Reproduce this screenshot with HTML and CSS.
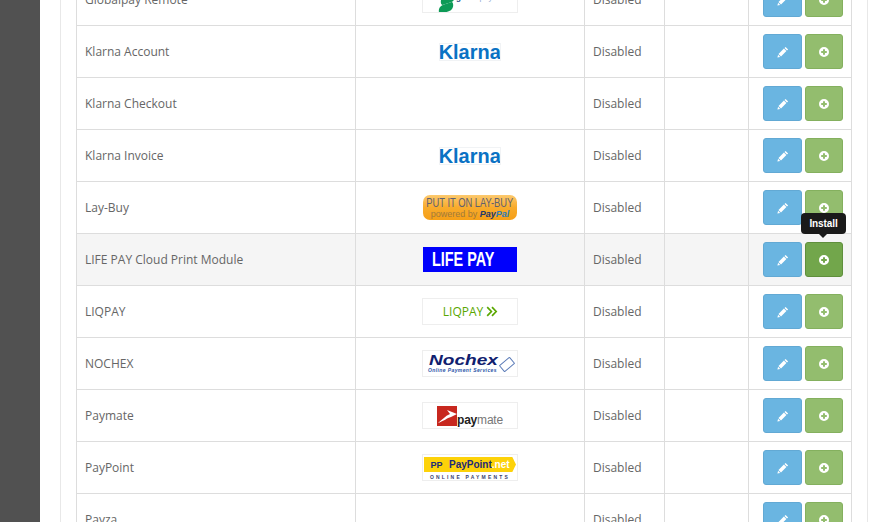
FILE: index.html
```html
<!DOCTYPE html>
<html lang="en">
<head>
    <meta charset="UTF-8">
    <meta name="viewport" content="width=device-width, initial-scale=1.0">
    <title>Extensions - Payments</title>
    <link rel="stylesheet" href="styles.css">
</head>
<body>
    <svg class="icon-defs" width="0" height="0">
        <symbol id="i-pencil" viewBox="0 0 12 12">
            <path d="M8.6.9 11.1 3.4 10 4.5 7.5 2zM6.9 2.6 9.4 5.100 4 10.500 1.500 8zM1.100 8.800 3.200 10.900.4 11.600z" fill="#fff"/>
        </symbol>
        <symbol id="i-plus" viewBox="0 0 12 12">
            <path fill-rule="evenodd" d="M6 1a5 5 0 1 1 0 10A5 5 0 0 1 6 1zM5 3.200V5H3.200V7H5V8.800H7V7H8.800V5H7V3.200z" fill="#fff"/>
        </symbol>
    </svg>

    <aside class="sidebar"></aside>

    <main class="content">
        <div class="panel">
            <table class="list">
                <colgroup>
                    <col class="col-name">
                    <col class="col-logo">
                    <col class="col-status">
                    <col class="col-order">
                    <col class="col-action">
                </colgroup>
                <tbody>
                    <tr>
                        <td>Globalpay Remote</td>
                        <td class="logo-cell"><span class="logo logo-global"><i class="leaf leaf-a"></i><i class="leaf leaf-b"></i><span class="global-text"><b>global</b>payments</span></span></td>
                        <td>Disabled</td>
                        <td></td>
                        <td class="actions"><a class="btn btn-edit"><svg><use href="#i-pencil"/></svg></a><a class="btn btn-add"><svg><use href="#i-plus"/></svg></a></td>
                    </tr>
                    <tr>
                        <td>Klarna Account</td>
                        <td class="logo-cell"><span class="logo logo-klarna"><span class="squeeze">Klarna</span></span></td>
                        <td>Disabled</td>
                        <td></td>
                        <td class="actions"><a class="btn btn-edit"><svg><use href="#i-pencil"/></svg></a><a class="btn btn-add"><svg><use href="#i-plus"/></svg></a></td>
                    </tr>
                    <tr>
                        <td>Klarna Checkout</td>
                        <td class="logo-cell"></td>
                        <td>Disabled</td>
                        <td></td>
                        <td class="actions"><a class="btn btn-edit"><svg><use href="#i-pencil"/></svg></a><a class="btn btn-add"><svg><use href="#i-plus"/></svg></a></td>
                    </tr>
                    <tr>
                        <td>Klarna Invoice</td>
                        <td class="logo-cell"><span class="logo logo-klarna"><span class="squeeze">Klarna</span></span></td>
                        <td>Disabled</td>
                        <td></td>
                        <td class="actions"><a class="btn btn-edit"><svg><use href="#i-pencil"/></svg></a><a class="btn btn-add"><svg><use href="#i-plus"/></svg></a></td>
                    </tr>
                    <tr>
                        <td>Lay-Buy</td>
                        <td class="logo-cell"><span class="logo logo-laybuy"><span class="lb-top">PUT IT ON LAY-BUY</span><span class="lb-sub">powered by <b>Pay<em>Pal</em></b></span></span></td>
                        <td>Disabled</td>
                        <td></td>
                        <td class="actions"><a class="btn btn-edit"><svg><use href="#i-pencil"/></svg></a><a class="btn btn-add"><svg><use href="#i-plus"/></svg></a></td>
                    </tr>
                    <tr class="hover">
                        <td>LIFE PAY Cloud Print Module</td>
                        <td class="logo-cell"><span class="logo logo-lifepay"><span class="lp-text">LIFE PAY</span></span></td>
                        <td>Disabled</td>
                        <td></td>
                        <td class="actions"><a class="btn btn-edit"><svg><use href="#i-pencil"/></svg></a><a class="btn btn-add"><span class="tooltip">Install</span><svg><use href="#i-plus"/></svg></a></td>
                    </tr>
                    <tr>
                        <td>LIQPAY</td>
                        <td class="logo-cell"><span class="logo logo-liqpay">LIQPAY<svg viewBox="0 0 10 9"><path d="M1 .8 4.500 4.500 1 8.200M5 .8 8.500 4.500 5 8.200" fill="none" stroke="#5aa700" stroke-width="1.400"/></svg></span></td>
                        <td>Disabled</td>
                        <td></td>
                        <td class="actions"><a class="btn btn-edit"><svg><use href="#i-pencil"/></svg></a><a class="btn btn-add"><svg><use href="#i-plus"/></svg></a></td>
                    </tr>
                    <tr>
                        <td>NOCHEX</td>
                        <td class="logo-cell"><span class="logo logo-nochex"><span class="nx-name">Nochex</span><span class="nx-sub">Online Payment Services</span><i class="nx-card"></i></span></td>
                        <td>Disabled</td>
                        <td></td>
                        <td class="actions"><a class="btn btn-edit"><svg><use href="#i-pencil"/></svg></a><a class="btn btn-add"><svg><use href="#i-plus"/></svg></a></td>
                    </tr>
                    <tr>
                        <td>Paymate</td>
                        <td class="logo-cell"><span class="logo logo-paymate"><i class="pm-flag"><svg viewBox="0 0 20 20"><path d="M1 17C5 14 8 10 13 8L10 4 20 8 14 11C10 12 7 15 1 17z" fill="#fff"/></svg></i><span class="pm-text"><b>pay</b>mate</span></span></td>
                        <td>Disabled</td>
                        <td></td>
                        <td class="actions"><a class="btn btn-edit"><svg><use href="#i-pencil"/></svg></a><a class="btn btn-add"><svg><use href="#i-plus"/></svg></a></td>
                    </tr>
                    <tr>
                        <td>PayPoint</td>
                        <td class="logo-cell"><span class="logo logo-paypoint"><span class="pp-bar"><span class="pp-mark">PP</span><span class="pp-name">PayPoint<em>.net</em></span></span><span class="pp-sub">ONLINE PAYMENTS</span></span></td>
                        <td>Disabled</td>
                        <td></td>
                        <td class="actions"><a class="btn btn-edit"><svg><use href="#i-pencil"/></svg></a><a class="btn btn-add"><svg><use href="#i-plus"/></svg></a></td>
                    </tr>
                    <tr>
                        <td>Payza</td>
                        <td class="logo-cell"></td>
                        <td>Disabled</td>
                        <td></td>
                        <td class="actions"><a class="btn btn-edit"><svg><use href="#i-pencil"/></svg></a><a class="btn btn-add"><svg><use href="#i-plus"/></svg></a></td>
                    </tr>
                </tbody>
            </table>
        </div>
    </main>
</body>
</html>
```
FILE: styles.css
```css
html, body {
    height: 100%;
}

body {
    margin: 0;
    display: flex;
    overflow: hidden;
    background: #fff;
    font-family: 'Open Sans', sans-serif;
    font-size: 12px;
    color: #666;
}

.icon-defs {
    position: absolute;
}

.sidebar {
    flex: 0 0 40px;
    background: #515151;
}

.content {
    flex: 1;
    padding-left: 20px;
    padding-right: 17px;
    overflow: hidden;
}

.panel {
    margin-top: -27px;
    padding: 0 16px 0 15px;
    border-left: 1px solid #e8e8e8;
    border-right: 1px solid #e8e8e8;
}

.list {
    width: 775px;
    table-layout: fixed;
    border-collapse: collapse;
}

.col-name { width: 279px; }
.col-logo { width: 229px; }
.col-status { width: 80px; }
.col-order { width: 84px; }
.col-action { width: 103px; }

.list td {
    height: 51px;
    padding: 0 8px;
    border: 1px solid #ddd;
    vertical-align: middle;
    box-sizing: content-box;
    white-space: nowrap;
}

.list tr.hover td {
    background: #f5f5f5;
}

.logo-cell {
    text-align: center;
}

.actions {
    text-align: right;
    font-size: 0;
}

/* buttons */
.btn {
    position: relative;
    display: inline-flex;
    align-items: center;
    justify-content: center;
    height: 33px;
    border-radius: 3px;
    border: 1px solid;
    vertical-align: middle;
}

.btn svg {
    width: 12px;
    height: 12px;
}

.btn-edit {
    width: 37px;
    margin-right: 3px;
    background: #6ab5e1;
    border-color: #62a9d4;
}

.btn-add {
    width: 36px;
    background: #93bd6e;
    border-color: #84b05e;
}

.hover .btn-add {
    background: #72a64b;
    border-color: #5f8f3c;
}

.tooltip {
    position: absolute;
    left: -5px;
    top: -30px;
    width: 45px;
    height: 21px;
    line-height: 21px;
    text-align: center;
    background: #1a1a1a;
    border-radius: 4px;
    color: #fff;
    font-family: 'Liberation Sans', sans-serif;
    font-size: 10px;
    font-weight: 700;
    letter-spacing: -.1px;
}

.tooltip::after {
    content: "";
    position: absolute;
    left: 18px;
    top: 21px;
    border: 4px solid transparent;
    border-top-color: #1a1a1a;
    border-bottom: 0;
}

/* payment logos */
.logo {
    position: relative;
    display: inline-flex;
    align-items: center;
    justify-content: center;
    box-sizing: border-box;
    width: 96px;
    height: 27px;
    border: 1px solid #eee;
    background: #fff;
    vertical-align: middle;
    overflow: hidden;
}

.leaf {
    position: absolute;
    left: 16px;
    width: 16px;
    height: 8px;
    background: #0d9a56;
    border-radius: 8px 2px;
    transform: rotate(-18deg);
}

.leaf-a { top: 8px; left: 17px; }
.leaf-b { top: 17px; left: 15px; }

.global-text {
    position: absolute;
    left: 33px;
    top: 6px;
    font-family: 'Liberation Sans', sans-serif;
    font-size: 8px;
    color: #8fa9cf;
}

.global-text b {
    color: #1d3f7f;
}

.logo-klarna {
    width: 62px;
    height: 18px;
    border-color: #f1f3f5;
    font-family: 'Liberation Sans', sans-serif;
    font-size: 21px;
    line-height: 16px;
    font-weight: 700;
    color: #0a72c4;
}

.squeeze {
    flex: none;
    transform: scaleX(.95);
}

.logo-laybuy {
    flex-direction: column;
    width: 94px;
    height: 25px;
    border: 0;
    border-radius: 7px;
    background: linear-gradient(#fcc96e, #f8ab2c 50%, #f59f17);
    font-family: 'Liberation Sans', sans-serif;
    color: #6b6b70;
}

.lb-top {
    flex: none;
    font-size: 12px;
    line-height: 12px;
    color: #5f6070;
    white-space: nowrap;
    transform: scaleX(.78);
}

.lb-sub {
    flex: none;
    font-size: 9px;
    line-height: 10px;
    color: #a07a3c;
}

.lb-sub b {
    font-style: italic;
    color: #24396b;
}

.lb-sub em {
    color: #2c7cb8;
}

.logo-lifepay {
    width: 94px;
    height: 25px;
    border: 0;
    justify-content: flex-start;
    padding-left: 9px;
    background: #0000fc;
    color: #fff;
    font-family: 'Liberation Sans', sans-serif;
    font-size: 20px;
    font-weight: 700;
}

.lp-text {
    flex: none;
    transform: scaleX(.72);
    transform-origin: left;
}

.logo-liqpay {
    gap: 3px;
    padding-left: 1px;
    font-family: 'Open Sans', sans-serif;
    font-size: 12px;
    color: #5aa700;
}

.logo-liqpay svg {
    width: 12px;
    height: 11px;
}

.nx-name {
    position: absolute;
    left: 6px;
    top: 0;
    font-family: 'Liberation Sans', sans-serif;
    font-size: 15px;
    line-height: 17px;
    font-weight: 700;
    font-style: italic;
    color: #10206e;
    transform: scaleX(1.27);
    transform-origin: left;
}

.nx-sub {
    position: absolute;
    left: 5px;
    top: 16px;
    font-family: 'Liberation Sans', sans-serif;
    font-size: 5px;
    line-height: 6px;
    font-weight: 700;
    font-style: italic;
    letter-spacing: .4px;
    color: #2c55a8;
}

.nx-card {
    position: absolute;
    left: 77px;
    top: 9px;
    width: 12px;
    height: 7px;
    border: 1px solid #5c7cb8;
    border-radius: 1px;
    transform: rotate(-40deg);
}

.pm-flag {
    display: block;
    width: 20px;
    height: 20px;
    background: #c8281f;
}

.pm-flag svg {
    display: block;
}

.pm-text {
    margin-top: 9px;
    font-family: 'Liberation Sans', sans-serif;
    font-size: 12px;
    line-height: 14px;
    letter-spacing: -.2px;
    color: #777;
}

.pm-text b {
    color: #222;
}

.logo-paypoint {
    flex-direction: column;
    justify-content: flex-start;
    padding-top: 2px;
    font-family: 'Liberation Sans', sans-serif;
}

.pp-bar {
    flex: none;
    display: flex;
    align-items: center;
    width: 92px;
    height: 15px;
    background: #fdd209;
    clip-path: polygon(0 0, 96% 0, 100% 50%, 96% 100%, 0 100%);
}

.pp-mark {
    width: 25px;
    text-align: center;
    font-size: 9px;
    font-weight: 700;
    color: #1d2a78;
}

.pp-name {
    font-size: 10px;
    font-weight: 700;
    color: #1d2a78;
}

.pp-name em {
    font-style: normal;
    color: #fff;
}

.pp-sub {
    margin-top: 2px;
    font-size: 5px;
    line-height: 6px;
    font-weight: 700;
    letter-spacing: 2.200px;
    color: #3a3f70;
    white-space: nowrap;
}
```
